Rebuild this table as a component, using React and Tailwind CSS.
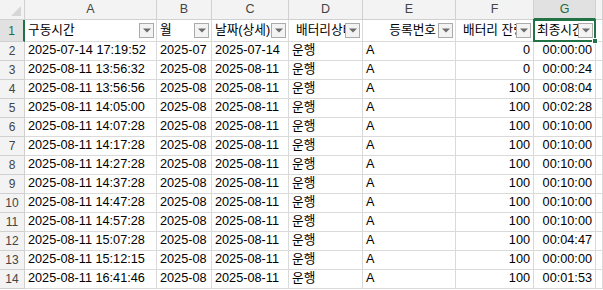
const cols = ['A', 'B', 'C', 'D', 'E', 'F', 'G', '']

const headers = [
  { text: '구동시간', cls: 'pl-[3px]' },
  { text: '월', cls: 'pl-[3px]' },
  { text: '날짜(상세)', cls: 'pl-[3px]' },
  { text: '배터리상태', cls: 'pl-[7px]' },
  { text: '등록번호', cls: 'justify-end pr-[2px]' },
  { text: '배터리 잔량', cls: 'pl-[7px]' },
  { text: '최종시간', cls: 'pl-[3px]' },
]

const rows = [
  ['2025-07-14 17:19:52', '2025-07', '2025-07-14', '0', '00:00:00'],
  ['2025-08-11 13:56:32', '2025-08', '2025-08-11', '0', '00:00:24'],
  ['2025-08-11 13:56:56', '2025-08', '2025-08-11', '100', '00:08:04'],
  ['2025-08-11 14:05:00', '2025-08', '2025-08-11', '100', '00:02:28'],
  ['2025-08-11 14:07:28', '2025-08', '2025-08-11', '100', '00:10:00'],
  ['2025-08-11 14:17:28', '2025-08', '2025-08-11', '100', '00:10:00'],
  ['2025-08-11 14:27:28', '2025-08', '2025-08-11', '100', '00:10:00'],
  ['2025-08-11 14:37:28', '2025-08', '2025-08-11', '100', '00:10:00'],
  ['2025-08-11 14:47:28', '2025-08', '2025-08-11', '100', '00:10:00'],
  ['2025-08-11 14:57:28', '2025-08', '2025-08-11', '100', '00:10:00'],
  ['2025-08-11 15:07:28', '2025-08', '2025-08-11', '100', '00:04:47'],
  ['2025-08-11 15:12:15', '2025-08', '2025-08-11', '100', '00:00:00'],
  ['2025-08-11 16:41:46', '2025-08', '2025-08-11', '100', '00:01:53'],
]

function FilterButton() {
  return (
    <span className="mr-[2px] flex h-[15px] w-[15px] shrink-0 items-center justify-center border border-[#ababab] bg-[#f3f3f3]">
      <svg width="8" height="5" viewBox="0 0 8 5">
        <path d="M0 0.5h8L4 4.5z" fill="#6b6b6b" />
      </svg>
    </span>
  )
}

const cell = 'flex items-center overflow-hidden whitespace-nowrap border-r border-b border-[#dadada] bg-white text-black'
const rowHead = 'flex items-center justify-center border-r border-b border-[#d0d0d0] bg-[#f3f3f3] text-[12px] text-[#444]'

export default function App() {
  return (
    <div
      className="grid h-[290px] w-[603px] overflow-hidden bg-white text-[12.7px] grid-cols-[25px_132px_55px_77px_74px_93px_78px_62px_1fr] grid-rows-[20px_22px_repeat(13,19px)]"
      style={{ fontFamily: '"Liberation Sans", "Noto Sans CJK KR", sans-serif' }}
    >
      <div className="relative border-r border-b border-[#d0d0d0] bg-[#f3f3f3]">
        <svg className="absolute right-[3px] bottom-[3px]" width="10" height="10" viewBox="0 0 10 10">
          <path d="M10 0V10H0z" fill="#d6d6d6" />
        </svg>
      </div>
      {cols.map((c) =>
        c === 'G' ? (
          <div key={c} className="flex items-center justify-center border-r border-[#d0d0d0] border-b-2 border-b-[#217346] bg-[#e1e1e1] text-[12.5px] text-[#1e6b40]">
            {c}
          </div>
        ) : (
          <div key={c || 'h'} className="flex items-center justify-center border-r border-b border-[#d0d0d0] bg-[#f3f3f3] text-[12.5px] text-[#444]">
            {c}
          </div>
        ),
      )}

      <div className="flex items-center justify-center border-r-2 border-r-[#217346] border-b border-[#d0d0d0] bg-[#e1e1e1] text-[12px] text-[#1e6b40]">
        1
      </div>
      {headers.map((h, i) => (
        <div key={h.text} className={`${cell} relative gap-0 overflow-visible`}>
          <div className="flex h-full min-w-0 flex-1 items-center">
            <span className={`flex min-w-0 flex-1 overflow-hidden ${h.cls}`}>{h.text}</span>
            <FilterButton />
          </div>
          {i === 6 && (
            <div className="pointer-events-none absolute -top-px -left-px -right-px -bottom-px border-2 border-[#217346]">
              <span className="absolute -right-[4px] -bottom-[4px] h-[6px] w-[6px] border border-white bg-[#217346]" />
            </div>
          )}
        </div>
      ))}
      <div className={cell} />

      {rows.map((r, i) => (
        <div key={i} className="contents">
          <div className={rowHead}>{i + 2}</div>
          <div className={`${cell} pl-[3px]`}>{r[0]}</div>
          <div className={`${cell} pl-[3px]`}>{r[1]}</div>
          <div className={`${cell} pl-[3px]`}>{r[2]}</div>
          <div className={`${cell} pl-[3px]`}>운행</div>
          <div className={`${cell} pl-[3px]`}>A</div>
          <div className={`${cell} justify-end pr-[3px]`}>{r[3]}</div>
          <div className={`${cell} justify-end pr-[3px]`}>{r[4]}</div>
          <div className={cell} />
        </div>
      ))}
    </div>
  )
}
